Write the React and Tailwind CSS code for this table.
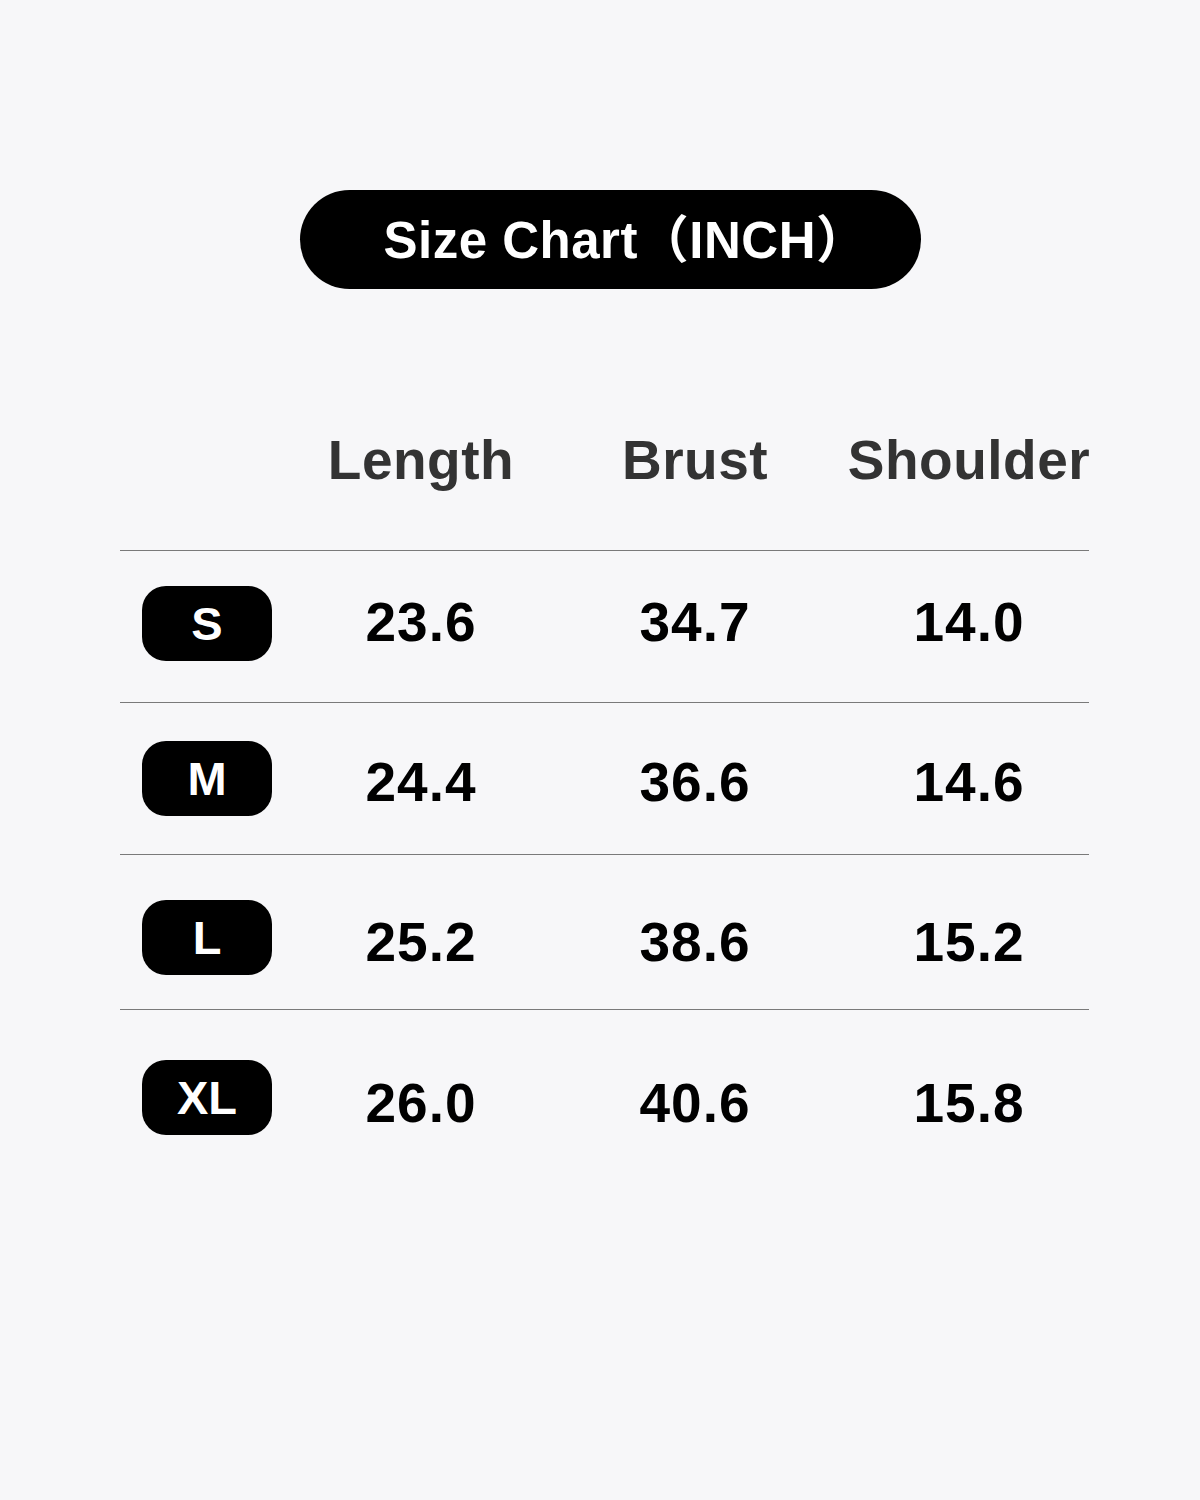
import React from "react";

const rows = [
  { size: "S", vals: ["23.6", "34.7", "14.0"], h: "h-[151px]", badge: "mb-[7px]", num: "mb-[9px]" },
  { size: "M", vals: ["24.4", "36.6", "14.6"], h: "h-[151px]", badge: "mb-[1px]", num: "mt-[7px]" },
  { size: "L", vals: ["25.2", "38.6", "15.2"], h: "h-[154px]", badge: "mt-[10px]", num: "mt-[20px]" },
  { size: "XL", vals: ["26.0", "40.6", "15.8"], h: "h-[175px]", badge: "mb-[1px]", num: "mt-[11px]" },
];

export default function App() {
  return (
    <div
      className="w-[1200px] h-[1500px] bg-[#f7f7f9] flex flex-col"
      style={{ fontFamily: '"Liberation Sans", Arial, "Noto Sans CJK SC", sans-serif' }}
    >
      <div className="mt-[190px] ml-[300px] w-[621px] h-[99px] rounded-full bg-black flex items-center justify-center">
        <span className="text-white font-bold text-[51px] leading-none pl-[30px] pt-[1px] tracking-[0.5px]">
          Size Chart（INCH）
        </span>
      </div>

      <div className="ml-[120px] w-[969px] mt-[144px] h-[117px] grid grid-cols-[164px_274px_274px_274px] items-start">
        <div />
        <div className="text-center text-[#333333] font-bold text-[55px] leading-none tracking-[0.5px]">Length</div>
        <div className="text-center text-[#333333] font-bold text-[55px] leading-none tracking-[0.5px]">Brust</div>
        <div className="text-center text-[#333333] font-bold text-[55px] leading-none tracking-[0.5px]">Shoulder</div>
      </div>

      {rows.map((r) => (
        <div key={r.size} className="ml-[120px] w-[969px] flex flex-col">
          <div className="h-px bg-[#7a7a7a]" />
          <div className={`${r.h} grid grid-cols-[164px_274px_274px_274px] items-center`}>
            <div className={`pl-[22px] ${r.badge}`}>
              <div className="w-[130px] h-[75px] rounded-[24px] bg-black flex items-center justify-center">
                <span className="text-white font-bold text-[47px] leading-none">{r.size}</span>
              </div>
            </div>
            {r.vals.map((v, j) => (
              <div key={j} className={`text-center text-black font-bold text-[55px] leading-none tracking-[1px] ${r.num}`}>
                {v}
              </div>
            ))}
          </div>
        </div>
      ))}
    </div>
  );
}
